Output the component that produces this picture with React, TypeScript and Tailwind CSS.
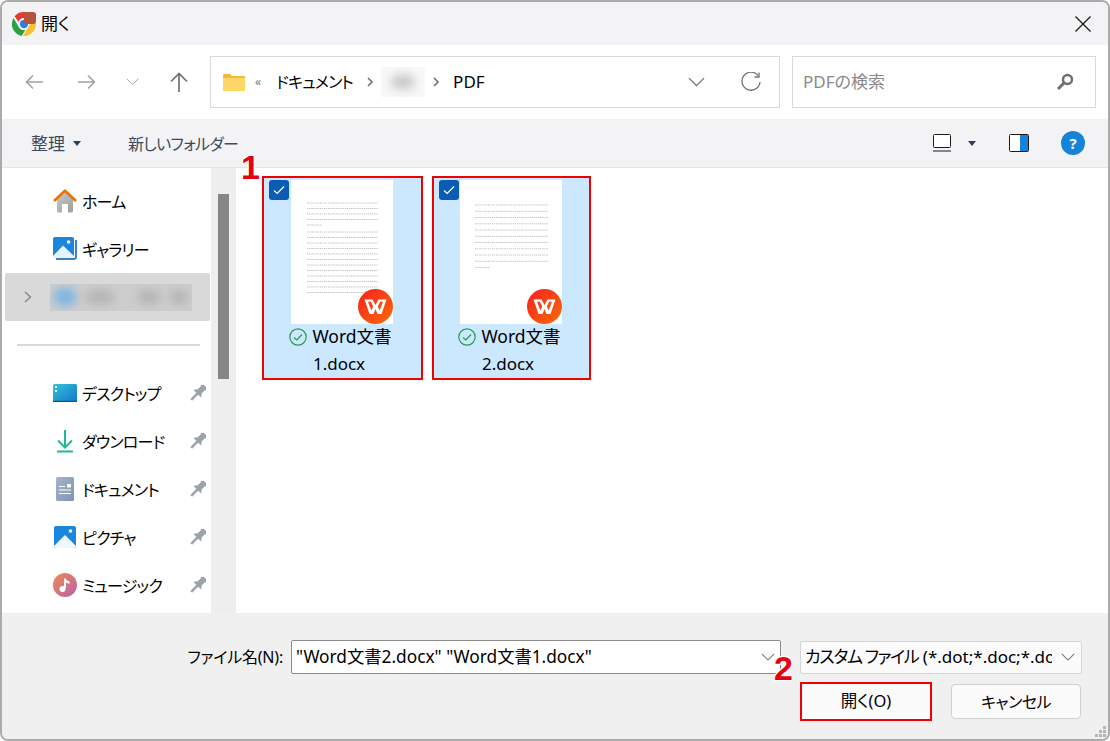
import React from "react";

const ChromeIcon = () => (
  <svg width="24" height="24" viewBox="0 0 24 24">
    <path d="M12 0a12 12 0 0 1 10.4 6H12a6 6 0 0 0-5.6 3.8L2.6 4.2A12 12 0 0 1 12 0z" fill="#e33b2e" />
    <path d="M1.6 6 6.7 15a6 6 0 0 0 6.6 2.9L9.6 24A12 12 0 0 1 1.6 6z" fill="#2f9e44" />
    <path d="M23 7.2A12 12 0 0 1 11 24l5.2-9a6 6 0 0 0 0-7.8z" fill="#fbc02d" />
    <circle cx="12" cy="12" r="5.2" fill="#fff" />
    <circle cx="12" cy="12" r="4.2" fill="#2f7fe0" />
    <rect x="12" y="0" width="12" height="12" rx="3" fill="#b5533c" />
  </svg>
);

const FolderIcon = () => (
  <svg width="22" height="18" viewBox="0 0 22 18">
    <path d="M0 2a1 1 0 0 1 1-1h6l2 2h12a1 1 0 0 1 1 1v13a1 1 0 0 1-1 1H1a1 1 0 0 1-1-1z" fill="#f4b93c" />
    <path d="M0 5h22v12a1 1 0 0 1-1 1H1a1 1 0 0 1-1-1z" fill="#fdd868" />
  </svg>
);

const HomeIcon = () => (
  <svg width="24" height="24" viewBox="0 0 24 24">
    <defs>
      <linearGradient id="homeBody" x1="0" y1="0" x2="1" y2="1">
        <stop offset="0" stopColor="#c9c9c9" />
        <stop offset="1" stopColor="#9e9e9e" />
      </linearGradient>
    </defs>
    <path d="M4 10.5 12 3l8 7.5V22a1.5 1.5 0 0 1-1.5 1.5H15V15H9v8.500H5.500A1.500 1.500 0 0 1 4 22z" fill="url(#homeBody)" />
    <path d="M1 12 12 1.800 23 12" fill="none" stroke="#e9730c" strokeWidth="2.800" strokeLinejoin="round" />
  </svg>
);

const GalleryIcon = () => (
  <svg width="24" height="24" viewBox="0 0 24 24">
    <path d="M3 22h18a2 2 0 0 0 2-2V3" fill="none" stroke="#3b82c4" strokeWidth="2" />
    <rect x="0" y="0" width="21" height="21" rx="2" fill="#1a86dc" />
    <path d="M0 19 10 8.500 21 19v1a1 1 0 0 1-1 1H1a1 1 0 0 1-1-1z" fill="#e6f3fc" />
    <circle cx="15.500" cy="5" r="1.800" fill="#fff" />
  </svg>
);

const DesktopIcon = () => (
  <svg width="24" height="18" viewBox="0 0 24 18">
    <defs>
      <linearGradient id="deskBody" x1="0" y1="0" x2="1" y2="1">
        <stop offset="0" stopColor="#2fc4dd" />
        <stop offset="1" stopColor="#1576c4" />
      </linearGradient>
    </defs>
    <rect width="24" height="18" rx="1.500" fill="url(#deskBody)" />
    <rect x="2" y="2" width="2" height="2" fill="#fff" />
    <rect x="2" y="6" width="2" height="2" fill="#fff" />
    <rect y="16.800" width="24" height="1.200" fill="#0f4f8f" />
  </svg>
);

const DownloadIcon = () => (
  <svg width="24" height="24" viewBox="0 0 24 24" fill="none" stroke="#1fb89a" strokeWidth="2">
    <path d="M12 1v17M5 11.500l7 7 7-7M4 22.500h16" />
  </svg>
);

const DocumentIcon = () => (
  <svg width="18" height="24" viewBox="0 0 18 24">
    <defs>
      <linearGradient id="docBody" x1="0" y1="0" x2="1" y2="1">
        <stop offset="0" stopColor="#a3b5ca" />
        <stop offset="1" stopColor="#7f95b0" />
      </linearGradient>
    </defs>
    <rect width="18" height="24" rx="1.500" fill="url(#docBody)" />
    <path d="M3 9.500h6M3 13h12M3 16.500h12" stroke="#fff" strokeWidth="1" />
    <rect x="11" y="7" width="4" height="3.500" fill="#fff" />
  </svg>
);

const PictureIcon = () => (
  <svg width="22" height="22" viewBox="0 0 22 22">
    <rect width="22" height="22" rx="2" fill="#1a86dc" />
    <path d="M0 20 11 9l11 11v0a2 2 0 0 1-2 2H2a2 2 0 0 1-2-2z" fill="#eef7fd" />
    <circle cx="16.500" cy="5" r="1.800" fill="#fff" />
  </svg>
);

const MusicIcon = () => (
  <svg width="24" height="24" viewBox="0 0 24 24">
    <defs>
      <linearGradient id="musicBody" x1="0" y1="0" x2="1" y2="1">
        <stop offset="0" stopColor="#ee8a55" />
        <stop offset="1" stopColor="#b862a8" />
      </linearGradient>
    </defs>
    <circle cx="12" cy="12" r="12" fill="url(#musicBody)" />
    <path d="M12 5.500v10" stroke="#fff" strokeWidth="1.800" />
    <path d="M12 5c1 2.500 3 2.500 4.500 3.500v2.500C15 10 13 10 12 8.500z" fill="#fff" />
    <circle cx="9.500" cy="16" r="3" fill="#fff" />
  </svg>
);

const PinIcon = () => (
  <svg width="16" height="16" viewBox="2 0 14 14" fill="#98a3ab">
    <g transform="rotate(45 8 8) translate(0 -2)">
      <rect x="4.500" y="0" width="7" height="2.200" rx=".5" />
      <rect x="5.500" y="2" width="5" height="5" />
      <path d="M5.500 6.500h5l2.500 3H3z" />
      <rect x="6.900" y="9" width="2.200" height="8" />
    </g>
  </svg>
);

const WpsBadge = ({ id }: { id: string }) => (
  <svg width="35" height="35" viewBox="0 0 35 35">
    <defs>
      <linearGradient id={id} x1="0" y1="0" x2="1" y2="1">
        <stop offset="0" stopColor="#f5211d" />
        <stop offset="1" stopColor="#fb6a08" />
      </linearGradient>
    </defs>
    <circle cx="17.500" cy="17.500" r="17.500" fill={`url(#${id})`} />
    <path
      d="M6.500 10.500h8l3 5.500 3-5.500h8l-5 14.500h-4l-2-5-2 5h-4zM10 12.800l3.400 8.700 1.800-4-2.400-4.700zM25 12.800h-2.800l-2.400 4.700 1.800 4z"
      fill="#fff"
      fillRule="evenodd"
    />
  </svg>
);

const RedNumber = ({ value, className }: { value: string; className: string }) => (
  <span
    className={`absolute font-['Liberation_Sans',sans-serif] font-bold text-[34px] leading-none text-[#e60012] [text-shadow:1px_1px_0_#fff,-1px_-1px_0_#fff,1px_-1px_0_#fff,-1px_1px_0_#fff] ${className}`}
  >
    {value}
  </span>
);

const Chevron = ({ width = 17, color = "#6f6f6f" }: { width?: number; color?: string }) => (
  <svg width={width} height={width * 0.6} viewBox="0 0 17 10" fill="none" stroke={color} strokeWidth="1.300">
    <path d="M1 1l7.500 7.500L16 1" />
  </svg>
);

const navItems = [
  { label: "デスクトップ", icon: <DesktopIcon /> },
  { label: "ダウンロード", icon: <DownloadIcon /> },
  { label: "ドキュメント", icon: <DocumentIcon /> },
  { label: "ピクチャ", icon: <PictureIcon /> },
  { label: "ミュージック", icon: <MusicIcon /> },
];

const linesOne = [23, 28.5, 34, 39.5, 52, 57.5, 63, 68.5, 74, 79.5, 85, 90.500, 96, 101.500, 107, 112.500];
const linesTwo = [25, 31.3, 37.500, 43.800, 50, 56.300, 62.500, 68.800, 75, 81.300];

const Thumb = ({ lines, last, x1, x2 }: { lines: number[]; last: number; x1: number; x2: number }) => (
  <svg width="102" height="144" viewBox="0 0 102 144" className="block">
    <g stroke="#c6c6c6" strokeWidth="1" strokeDasharray="1.600 0.500 1.200 0.900">
      {lines.map((y) => (
        <line key={y} x1={x1} x2={x2} y1={y} y2={y} />
      ))}
      <line x1={x1} x2={x1 + 15} y1={last} y2={last} />
    </g>
  </svg>
);

const FileTile = ({
  name,
  width,
  thumb,
  badgeId,
}: {
  name: string;
  width: string;
  thumb: React.ReactNode;
  badgeId: string;
}) => (
  <div className={`relative h-[204px] ${width} border-2 border-[#f00000] bg-[#cce8ff] flex flex-col items-center pt-[2px] pr-[1px]`}>
    <div className="absolute left-[5px] top-[2px] w-5 h-5 rounded-[3px] bg-[#0a5cb5] flex items-center justify-center">
      <svg width="12" height="10" viewBox="0 0 12 10" fill="none" stroke="#fff" strokeWidth="1.200">
        <path d="M1 5.500l3.200 3L11 1.500" />
      </svg>
    </div>
    <div className="relative w-[102px] h-[144px] bg-white">
      {thumb}
      <div className="absolute right-0 bottom-0 h-[35px]">
        <WpsBadge id={badgeId} />
      </div>
    </div>
    <div className="flex items-center gap-[5px] h-[26px] mr-[3px] text-[17.500px] leading-none text-black">
      <svg width="18" height="18" viewBox="0 0 18 18" fill="none" stroke="#2a9a4a" strokeWidth="1.200">
        <circle cx="9" cy="9" r="8.200" />
        <path d="M5 9.500l2.800 2.500L13 6.500" />
      </svg>
      <span>Word文書</span>
    </div>
    <div className="h-[26px] flex items-center mr-[6px] text-[17px] leading-none text-black">{name}</div>
  </div>
);

export default function App() {
  return (
    <div className="relative w-[1110px] h-[741px] overflow-hidden bg-white font-['Noto_Sans','Noto_Sans_CJK_JP',sans-serif] text-[17px] [font-feature-settings:'palt'] text-black">
      <div className="w-full h-full flex flex-col border-2 border-[#ababab] rounded-[8px] overflow-hidden">
        {/* Title bar */}
        <div className="h-[43px] shrink-0 bg-[#f3f3f5] flex items-center pl-[10px] pr-[17px]">
          <ChromeIcon />
          <span className="ml-[5px] text-[17px]">開く</span>
          <svg width="16" height="16" viewBox="0 0 16 16" stroke="#1a1a1a" strokeWidth="1.300" className="ml-auto">
            <path d="M.5.500l15 15M15.500.500l-15 15" />
          </svg>
        </div>

        {/* Address row */}
        <div className="h-[74px] shrink-0 bg-white flex items-center pl-[23px] pr-[12px]">
          <svg width="18" height="16" viewBox="0 0 18 16" fill="none" stroke="#a3a3a3" strokeWidth="1.600">
            <path d="M18 8H1.500M8 1.500 1.500 8 8 14.500" />
          </svg>
          <svg width="18" height="16" viewBox="0 0 18 16" fill="none" stroke="#a3a3a3" strokeWidth="1.600" className="ml-[35px]">
            <path d="M0 8h16.500M10 1.500 16.500 8 10 14.500" />
          </svg>
          <div className="ml-[30px]">
            <Chevron width={13} color="#a3a3a3" />
          </div>
          <svg width="18" height="20" viewBox="0 0 18 20" fill="none" stroke="#707070" strokeWidth="1.700" className="ml-[31px]">
            <path d="M9 20V1.500M1 9.500l8-8 8 8" />
          </svg>
          <div className="ml-[22px] w-[570px] h-[52px] border border-[#d9d9d9] flex items-center pl-[12px] pr-[18px]">
            <FolderIcon />
            <span className="ml-[10px] text-[12px] text-[#777] leading-none">«</span>
            <span className="ml-[15px] w-[78px] whitespace-nowrap text-[16px] tracking-[-0.8px]">ドキュメント</span>
            <svg width="7" height="10" viewBox="0 0 7 10" fill="none" stroke="#6f6f6f" strokeWidth="1.600" className="ml-[13px]">
              <path d="M1 1l4 4-4 4" />
            </svg>
            <div className="ml-[7px] w-[44px] h-[30px] overflow-hidden bg-[#f8f8f8] flex items-center justify-center">
              <div className="w-[24px] h-[14px] rounded-full bg-[#c8c8c8] blur-[5px]" />
            </div>
            <svg width="7" height="10" viewBox="0 0 7 10" fill="none" stroke="#6f6f6f" strokeWidth="1.600" className="ml-[8px]">
              <path d="M1 1l4 4-4 4" />
            </svg>
            <span className="ml-[13px]">PDF</span>
            <div className="ml-auto flex items-center gap-[36px]">
              <Chevron />
              <svg width="20" height="20" viewBox="0 0 20 20" fill="none" stroke="#707070" strokeWidth="1.300">
                <path d="M17 3.500A9 9 0 1 0 19 10" />
                <path d="M18 .500v4.500h-4.500" />
              </svg>
            </div>
          </div>
          <div className="ml-[12px] w-[304px] h-[52px] border border-[#d9d9d9] flex items-center pl-[10px] pr-[21px]">
            <span className="text-[#8a8a8a]">PDFの検索</span>
            <svg width="18" height="18" viewBox="0 0 18 18" fill="none" className="ml-auto">
              <circle cx="11.500" cy="6.500" r="4.500" stroke="#6f6f6f" strokeWidth="2.500" />
              <path d="M8 10l-6 6" stroke="#6f6f6f" strokeWidth="3" />
            </svg>
          </div>
        </div>

        {/* Toolbar */}
        <div className="h-[49px] shrink-0 bg-[#f3f3f5] border-b border-[#e6e6e6] flex items-center pl-[29px] pr-[23px] text-[#3a4a5c]">
          <span className="pt-[1px]">整理</span>
          <svg width="8" height="5" viewBox="0 0 8 5" fill="#2c3e5c" className="ml-[8px]">
            <path d="M0 0h8L4 5z" />
          </svg>
          <span className="ml-[47px] pt-[1px] text-[16px] tracking-[-0.7px]">新しいフォルダー</span>
          <svg width="18" height="18" viewBox="0 0 18 18" fill="none" stroke="#1a1a1a" className="ml-auto">
            <rect x=".5" y=".5" width="17" height="13" rx="1" fill="#fff" />
            <path d="M0 17h18" />
          </svg>
          <svg width="8" height="5" viewBox="0 0 8 5" fill="#2c3e5c" className="ml-[17px]">
            <path d="M0 0h8L4 5z" />
          </svg>
          <svg width="20" height="18" viewBox="0 0 20 18" className="ml-[33px]">
            <rect x=".5" y=".5" width="19" height="17" rx="1" fill="#fff" stroke="#1a1a1a" />
            <rect x="11" y="1" width="8" height="16" fill="#1484d8" />
          </svg>
          <div className="ml-[32px] w-6 h-6 rounded-full bg-[#1484d8] flex items-center justify-center text-white text-[15px] font-bold leading-none">?</div>
        </div>

        {/* Main area */}
        <div className="flex-1 min-h-0 flex bg-white">
          <div className="w-[209px] shrink-0 pt-[9px] overflow-hidden text-[16px] tracking-[-0.8px]">
            <div className="h-12 flex items-center pl-[51px] gap-[5px]">
              <div className="w-6 h-6 flex items-center justify-center"><HomeIcon /></div>
              <span className="pt-[1px]">ホーム</span>
            </div>
            <div className="h-12 flex items-center pl-[51px] gap-[5px]">
              <div className="w-6 h-6 flex items-center justify-center"><GalleryIcon /></div>
              <span className="pt-[1px]">ギャラリー</span>
            </div>
            <div className="h-12 ml-[3px] mr-[1px] rounded-[2px] bg-[#d9d9d9] flex items-center pl-[19px]">
              <svg width="8" height="12" viewBox="0 0 8 12" fill="none" stroke="#8a8a8a" strokeWidth="1.500">
                <path d="M1 1l5.500 5L1 11" />
              </svg>
              <div className="ml-[18px] w-[142px] h-[27px] overflow-hidden bg-[#cdcdcd] flex items-center gap-[10px] px-[4px]">
                <div className="w-[24px] h-[18px] rounded-full bg-[#7ab4e4] blur-[5px]" />
                <div className="w-[30px] h-[14px] rounded-full bg-[#b4b4b4] blur-[5px]" />
                <div className="w-[24px] h-[14px] rounded-full bg-[#b4b4b4] blur-[5px] ml-[14px]" />
                <div className="w-[20px] h-[14px] rounded-full bg-[#b4b4b4] blur-[5px]" />
              </div>
            </div>
            <div className="h-12 flex items-center pl-[15px] pr-[11px]">
              <div className="w-full h-[2px] bg-[#d9d9d9]" />
            </div>
            {navItems.map((item) => (
              <div key={item.label} className="h-12 flex items-center pl-[51px] pr-[5px] gap-[5px]">
                <div className="w-6 h-6 flex items-center justify-center">{item.icon}</div>
                <span className="pt-[1px]">{item.label}</span>
                <div className="ml-auto"><PinIcon /></div>
              </div>
            ))}
          </div>

          <div className="w-[25px] shrink-0 bg-[#eeeeee] pt-[26px] pl-[7px]">
            <div className="w-[11px] h-[185px] bg-[#868686]" />
          </div>

          <div className="flex-1 flex items-start gap-[9px] pl-[26px] pt-[8px] bg-white">
            <FileTile
              name="1.docx"
              width="w-[161px]"
              badgeId="wpsOne"
              thumb={<Thumb lines={linesOne} last={45} x1={16} x2={87} />}
            />
            <FileTile
              name="2.docx"
              width="w-[159px]"
              badgeId="wpsTwo"
              thumb={<Thumb lines={linesTwo} last={87.600} x1={15} x2={88} />}
            />
          </div>
        </div>

        {/* Bottom panel */}
        <div className="h-[126px] shrink-0 bg-[#f0f0f0] pr-[26px] pt-[27px] flex flex-col items-end">
          <div className="flex items-center h-[34px]">
            <span className="text-[16px] tracking-[-0.2px]">ファイル名(N):</span>
            <div className="ml-[8px] w-[490px] h-[34px] bg-white border border-[#8c8c8c] rounded-[2px] flex items-center pl-[4px] pr-[5px] text-[17.300px] text-black">
              <span>"Word文書2.docx" "Word文書1.docx"</span>
              <div className="ml-auto"><Chevron width={14} color="#777" /></div>
            </div>
            <div className="ml-[19px] w-[282px] h-[33px] bg-[#fbfbfb] border border-[#d4d4d4] rounded-[2px] flex items-center pl-[4px] pr-[6px] text-[17px] text-black">
              <span className="w-[247px] overflow-hidden whitespace-nowrap">
                <span className="tracking-[-1.3px]">カスタム ファイル</span> (*.dot;*.doc;*.docx)
              </span>
              <div className="ml-auto"><Chevron width={14} color="#777" /></div>
            </div>
          </div>
          <div className="flex items-center gap-[19px] mt-[8px] pr-[1px]">
            <div className="w-[132px] h-[39px] border-2 border-[#f00000] bg-[#fbfbfb] flex items-center justify-center text-[16.500px] text-black">開く(O)</div>
            <div className="w-[130px] h-[35px] border border-[#d0d0d0] rounded-[4px] bg-[#fbfbfb] flex items-center justify-center text-[16px] tracking-[-0.5px] text-black">キャンセル</div>
          </div>
        </div>
      </div>

      <RedNumber value="1" className="left-[241px] top-[150px]" />
      <RedNumber value="2" className="left-[774px] top-[651px]" />

      {/* Resize grip */}
      <svg width="12" height="12" viewBox="0 0 12 12" fill="#b5b5b5" className="absolute right-[3px] bottom-[3px]">
        <rect x="8" y="0" width="3" height="3" />
        <rect x="4" y="4" width="3" height="3" />
        <rect x="8" y="4" width="3" height="3" />
        <rect x="0" y="8" width="3" height="3" />
        <rect x="4" y="8" width="3" height="3" />
        <rect x="8" y="8" width="3" height="3" />
      </svg>
    </div>
  );
}
